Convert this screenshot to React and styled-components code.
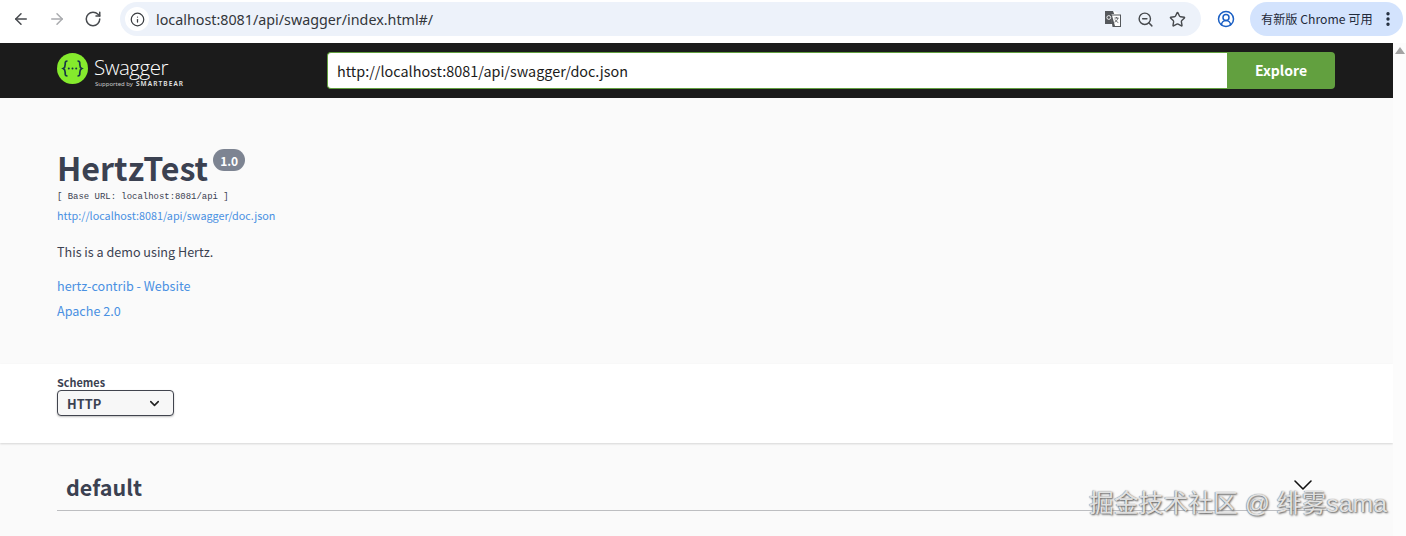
import React from "react";
import styled, { createGlobalStyle } from "styled-components";
import { ArrowLeft, ArrowRight, RotateCw, Info, ZoomOut, Star, CircleUserRound, EllipsisVertical, ChevronDown } from "lucide-react";

const Global = createGlobalStyle`
  html, body { margin: 0; padding: 0; background: #fff; overflow: hidden; }
  body { width: 1406px; height: 536px; font-family: "Noto Sans CJK SC", "Noto Sans", sans-serif; color: #3b4151; }
  * { box-sizing: border-box; }
`;

const Screen = styled.div`
  position: relative;
  width: 1406px;
  height: 536px;
  overflow: hidden;
  display: flex;
  flex-direction: column;
`;

const ChromeBar = styled.header`
  height: 43px;
  flex: none;
  display: flex;
  align-items: flex-start;
  padding: 2px 4px 0 0;
  background: #fff;
`;

const NavGroup = styled.div`
  width: 120px;
  height: 34px;
  flex: none;
  display: flex;
  align-items: center;
  padding-left: 12px;
  gap: 18px;
`;

const NavIcon = styled.span`
  width: 18px;
  height: 18px;
  display: flex;
  color: ${(p) => (p.$muted ? "#a9abae" : "#474a4e")};
`;

const Omnibox = styled.div`
  width: 1081px;
  height: 34px;
  flex: none;
  display: flex;
  align-items: center;
  background: #edf2fa;
  border-radius: 17px;
  padding: 0 15px 0 8px;
`;

const InfoChip = styled.span`
  width: 18px;
  height: 18px;
  display: flex;
  align-items: center;
  justify-content: center;
  color: #3a3d41;
  background: #fff;
  border-radius: 50%;
  outline: 3px solid #fff;
`;

const UrlText = styled.span`
  margin-left: 10px;
  font-family: "Noto Sans", sans-serif;
  font-size: 14.3px;
  color: #33363a;
  flex: 1;
`;

const OmniActions = styled.div`
  display: flex;
  align-items: center;
  gap: 15px;
  color: #474a4e;
`;

const ProfileSlot = styled.span`
  width: 49px;
  flex: none;
  display: flex;
  justify-content: center;
  color: #1a5fc4;
  margin-top: 8px;
`;

const UpdatePill = styled.div`
  width: 153px;
  height: 34px;
  flex: none;
  display: flex;
  align-items: center;
  justify-content: space-between;
  background: #d3e3fd;
  border-radius: 17px;
  padding: 0 6px 0 11px;
  font-size: 12.2px;
  color: #1f2a3a;
  white-space: nowrap;
`;

const Body = styled.div`
  flex: 1;
  display: flex;
  min-height: 0;
`;

const Page = styled.main`
  width: 1393px;
  flex: none;
  display: flex;
  flex-direction: column;
  background: #fafafa;
`;

const ScrollTrack = styled.aside`
  flex: 1;
  background: #fcfcfc;
  display: flex;
  justify-content: center;
  padding-top: 4px;
`;

const ScrollArrow = styled.span`
  width: 0;
  height: 0;
  border-left: 5px solid transparent;
  border-right: 5px solid transparent;
  border-bottom: 7px solid #a3a3a3;
`;

const Topbar = styled.nav`
  height: 55px;
  flex: none;
  background: #1b1b1b;
  display: flex;
  align-items: center;
  padding: 0 58px 0 57px;
`;

const Logo = styled.div`
  width: 270px;
  flex: none;
  display: flex;
  align-items: flex-start;
  gap: 6px;
`;

const LogoWords = styled.div`
  display: flex;
  flex-direction: column;
  color: #fff;
`;

const LogoName = styled.span`
  font-size: 20.5px;
  line-height: 24px;
  font-weight: 300;
  letter-spacing: -0.5px;
  font-family: "Open Sans", sans-serif;
  margin-top: 2px;
`;

const LogoSub = styled.span`
  display: flex;
  align-items: baseline;
  gap: 3px;
  font-family: "Noto Sans", sans-serif;
  font-size: 6px;
  line-height: 9px;
  color: #c9c9c9;
  white-space: nowrap;
  margin-left: 1px;
`;

const LogoBrand = styled.b`
  font-size: 6.5px;
  font-weight: 600;
  letter-spacing: 1.100px;
  color: #e6e6e6;
`;

const ExploreForm = styled.div`
  flex: 1;
  height: 37px;
  display: flex;
`;

const ExploreInput = styled.div`
  flex: 1;
  display: flex;
  align-items: center;
  background: #fff;
  border: 1px solid #62a03f;
  border-right: 0;
  border-radius: 4px 0 0 4px;
  padding-left: 9px;
  font-size: 14.4px;
  color: #1b1b1b;
`;

const ExploreButton = styled.div`
  width: 108px;
  flex: none;
  display: flex;
  align-items: center;
  justify-content: center;
  background: #62a03f;
  border-radius: 0 4px 4px 0;
  color: #fff;
  font-size: 14px;
  font-weight: 700;
  padding-bottom: 1px;
`;

const InfoSection = styled.section`
  height: 266px;
  flex: none;
  padding: 48px 57px 0;
`;

const TitleRow = styled.div`
  display: flex;
  align-items: flex-start;
  height: 50px;
`;

const Title = styled.h1`
  margin: 0;
  font-size: 32.2px;
  line-height: 42px;
  font-weight: 700;
  color: #3b4151;
`;

const Version = styled.span`
  margin: 3px 0 0 5px;
  width: 32px;
  height: 22px;
  display: flex;
  align-items: center;
  justify-content: center;
  background: #7d8492;
  border-radius: 11px;
  color: #fff;
  font-size: 12px;
  font-weight: 700;
`;

const BaseUrl = styled.div`
  font-family: "Liberation Mono", monospace;
  font-size: 8.95px;
  line-height: 12px;
  color: #3b4151;
  margin-top: -5px;
`;

const DocLink = styled.div`
  font-size: 10.8px;
  line-height: 16px;
  color: #4990e2;
  margin-top: 4px;
`;

const Description = styled.p`
  margin: 19px 0 0;
  font-size: 12.6px;
  line-height: 20px;
  color: #3b4151;
`;

const InfoLink = styled.div`
  font-size: 12.6px;
  line-height: 20px;
  color: #4990e2;
  margin-top: ${(p) => p.$gap}px;
`;

const SchemesBar = styled.section`
  height: 79px;
  flex: none;
  background: #fff;
  box-shadow: 0 1px 2px rgba(0, 0, 0, 0.15);
  padding: 12px 57px 0;
`;

const SchemesLabel = styled.div`
  font-size: 10.9px;
  line-height: 13px;
  font-weight: 700;
  color: #3b4151;
  margin-bottom: 1px;
`;

const Select = styled.div`
  width: 117px;
  height: 26px;
  display: flex;
  align-items: center;
  justify-content: space-between;
  background: #f7f7f7;
  border: 1px solid #41444e;
  border-radius: 4px;
  box-shadow: 0 1px 2px rgba(0, 0, 0, 0.25);
  padding: 0 11px 0 9px;
  font-size: 12.8px;
  font-weight: 700;
  color: #3b4151;
`;

const TagSection = styled.section`
  flex: 1;
  padding: 0 57px;
  min-height: 0;
`;

const TagHeader = styled.div`
  height: 68px;
  display: flex;
  align-items: center;
  justify-content: space-between;
  border-bottom: 1px solid #bdbec1;
  padding: 20px 17px 0 9px;
`;

const TagName = styled.h3`
  margin: 0;
  font-size: 21.5px;
  font-weight: 700;
  color: #3b4151;
`;

const TagChevron = styled.span`
  display: flex;
  color: #111;
  margin: -4px 0 0;
`;

const Watermark = styled.div`
  position: absolute;
  left: 1089px;
  top: 487px;
  font-family: "Liberation Sans", "Noto Sans CJK SC", sans-serif;
  font-size: 24.8px;
  line-height: 34px;
  white-space: nowrap;
  color: rgba(240, 240, 240, 0.9);
  text-shadow: 1px 1px 2px #555, -0.5px -0.5px 1px #888;
`;

const TranslateIcon = () => (
  <svg width="18" height="18" viewBox="0 0 18 18">
    <path d="M1 1.5h9.5L16.500 4.500V16.500H8L7 14H1z" fill="#fff" />
    <path d="M1 1h8l1.200 3H7.500L8 14H1z" fill="#55585c" />
    <path d="M6.500 4.500h10.500v12.500H8.500zM8 5.500l3 10.500h5V5.500z" fill="#55585c" />
    <path d="M10.500 8h4M12.500 7v1M14 8c-.5 2-2 3.500-3.500 4.200M11 9.500c.6 1.200 2 2.600 3.300 3" stroke="#55585c" strokeWidth="0.9" fill="none" />
    <circle cx="4.800" cy="7.500" r="1.900" fill="none" stroke="#fff" strokeWidth="0.9" />
  </svg>
);

const SwaggerMark = () => (
  <svg width="31" height="31" viewBox="0 0 31 31">
    <circle cx="15.500" cy="15.500" r="15.500" fill="#85ea2d" />
    <path d="M10.500 8c-2.500 0-2.300 1.500-2.300 3.500 0 2.200-.7 3.400-2 4 1.300.6 2 1.800 2 4 0 2 -.2 3.500 2.300 3.500M20.500 8c2.500 0 2.300 1.500 2.300 3.500 0 2.200.7 3.400 2 4-1.300.6-2 1.800-2 4 0 2 .2 3.500-2.300 3.500" fill="none" stroke="#173647" strokeWidth="1.700" />
    <circle cx="11.800" cy="15.600" r="1" fill="#173647" />
    <circle cx="15.500" cy="15.600" r="1" fill="#173647" />
    <circle cx="19.200" cy="15.600" r="1" fill="#173647" />
  </svg>
);

export default function App() {
  return (
    <Screen>
      <Global />
      <ChromeBar>
        <NavGroup>
          <NavIcon><ArrowLeft size={18} strokeWidth={2} /></NavIcon>
          <NavIcon $muted><ArrowRight size={18} strokeWidth={2} /></NavIcon>
          <NavIcon><RotateCw size={18} strokeWidth={2} /></NavIcon>
        </NavGroup>
        <Omnibox>
          <InfoChip><Info size={15} strokeWidth={2} /></InfoChip>
          <UrlText>localhost:8081/api/swagger/index.html#/</UrlText>
          <OmniActions>
            <TranslateIcon />
            <ZoomOut size={17} strokeWidth={2} />
            <Star size={17} strokeWidth={2} />
          </OmniActions>
        </Omnibox>
        <ProfileSlot><CircleUserRound size={18} strokeWidth={2} /></ProfileSlot>
        <UpdatePill>
          有新版 Chrome 可用
          <EllipsisVertical size={18} strokeWidth={2.500} />
        </UpdatePill>
      </ChromeBar>
      <Body>
        <Page>
          <Topbar>
            <Logo>
              <SwaggerMark />
              <LogoWords>
                <LogoName>Swagger</LogoName>
                <LogoSub>Supported by <LogoBrand>SMARTBEAR</LogoBrand></LogoSub>
              </LogoWords>
            </Logo>
            <ExploreForm>
              <ExploreInput>http://localhost:8081/api/swagger/doc.json</ExploreInput>
              <ExploreButton>Explore</ExploreButton>
            </ExploreForm>
          </Topbar>
          <InfoSection>
            <TitleRow>
              <Title>HertzTest</Title>
              <Version>1.0</Version>
            </TitleRow>
            <BaseUrl>[ Base URL: localhost:8081/api ]</BaseUrl>
            <DocLink>http://localhost:8081/api/swagger/doc.json</DocLink>
            <Description>This is a demo using Hertz.</Description>
            <InfoLink $gap={14}>hertz-contrib - Website</InfoLink>
            <InfoLink $gap={5}>Apache 2.0</InfoLink>
          </InfoSection>
          <SchemesBar>
            <SchemesLabel>Schemes</SchemesLabel>
            <Select>HTTP<ChevronDown size={15} strokeWidth={2.500} color="#222" /></Select>
          </SchemesBar>
          <TagSection>
            <TagHeader>
              <TagName>default</TagName>
              <TagChevron><ChevronDown size={32} strokeWidth={1.200} /></TagChevron>
            </TagHeader>
          </TagSection>
        </Page>
        <ScrollTrack><ScrollArrow /></ScrollTrack>
      </Body>
      <Watermark>掘金技术社区 @ 绯雾sama</Watermark>
    </Screen>
  );
}
